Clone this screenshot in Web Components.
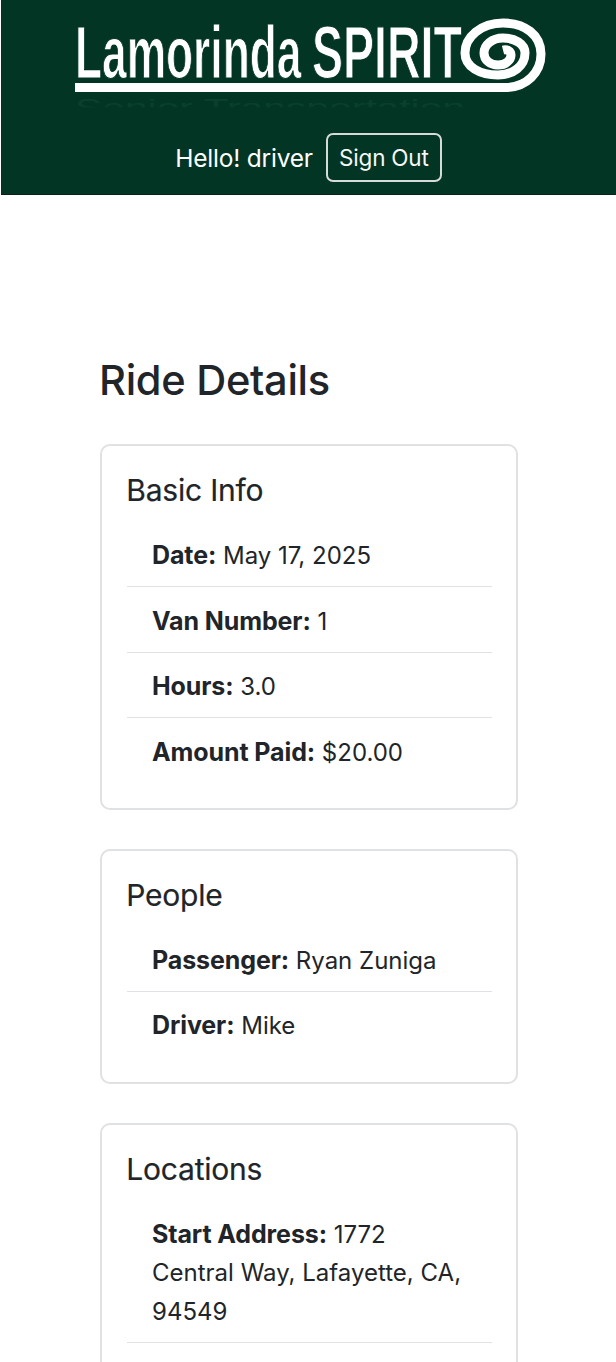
<!DOCTYPE html>
<html lang="en">
<head>
<meta charset="utf-8">
<title>Ride Details</title>
<style>
    html, body { margin: 0; height: 100%; overflow: hidden; background: #fff; }
    body { font-family: Inter, "Liberation Sans", sans-serif; color: #212529; }
</style>
</head>
<body>
<template id="site-header-tpl">
    <style>
        :host { display: block; background: #023524; color: #fff; height: 194px; margin-left: 1px; border-bottom: 1px solid #0b1f18; }
        svg.logo { display: block; width: 616px; height: 120px; margin-left: -1px; }
        .user { display: flex; justify-content: center; align-items: center; gap: 13px; height: 49px; margin-top: 13px; }
        .hello { font-size: 24.5px; letter-spacing: -0.2px; }
        button { font: inherit; font-size: 22.5px; letter-spacing: -0.2px; color: #f6f7f6; background: transparent; border: 2px solid #d5dbd8; border-radius: 7px; width: 116px; height: 49px; padding: 0; }
    </style>
    <svg class="logo" viewBox="0 0 616 120" aria-label="Lamorinda SPIRIT">
        <defs>
            <linearGradient id="fade" gradientUnits="userSpaceOnUse" x1="0" y1="96" x2="0" y2="108">
                <stop offset="0" stop-color="#0c4231"/>
                <stop offset="0.85" stop-color="#0a3e2d"/>
                <stop offset="1" stop-color="#023524"/>
            </linearGradient>
        </defs>
        <text transform="translate(75 78) scale(.5986 1)" font-family="'Liberation Sans', sans-serif" font-weight="700" font-size="74" fill="#fff" stroke="#023524" stroke-width="1.2">Lamorinda</text>
        <text transform="translate(312 78) scale(.629 1)" font-family="'Liberation Sans', sans-serif" font-weight="700" font-size="74" fill="#fff" stroke="#023524" stroke-width="1.2">SPIRIT</text>
        <path d="M75 87.5H505C527 87.5 541 72 541 54C541 35 525 23 503 23C481 23 465 37 465 53C465 67 480 75 498 75C513 75 525 66 525 53C525 44 515 38 503 38C492 38 484 45 484 53C484 60 490 65 498 65C506 65 511 60 511 55C511 51 507 49 503 50" fill="none" stroke="#fff" stroke-width="9"/>
        <text x="75" y="116" font-family="'Liberation Sans', sans-serif" font-size="24" fill="url(#fade)" textLength="390" lengthAdjust="spacingAndGlyphs">Senior Transportation</text>
    </svg>
    <div class="user">
        <span class="hello">Hello! driver</span>
        <button type="button">Sign Out</button>
    </div>
</template>

<template id="detail-card-tpl">
    <style>
        :host { display: block; border: 2px solid #e0e1e3; border-radius: 10px; padding: 25px 24px 25px 25px; margin-bottom: 39px; background: #fff; }
        h2 { margin: 0 0 11.5px -0.8px; font-size: 30px; line-height: 39px; font-weight: 400; letter-spacing: -0.2px; -webkit-text-stroke: 0.2px currentColor; }
    </style>
    <h2><slot name="title"></slot></h2>
    <slot></slot>
</template>

<template id="detail-row-tpl">
    <style>
        :host { display: block; padding: 14.5px 26px 10.5px 25px; font-size: 24px; line-height: 38.6px; border-bottom: 1px solid #dfe1e4; }
        :host(:last-child) { border-bottom: 0; }
        b { font-weight: 700; font-size: 25px; letter-spacing: -0.1px; }
    </style>
    <b><slot name="label"></slot></b> <slot></slot>
</template>

<template id="ride-details-tpl">
    <style>
        :host { display: block; height: 1167px; overflow: hidden; padding: 0 98px 0 100px; }
        h1 { margin: 0 0 38px -1px; padding-top: 159px; font-size: 41.6px; line-height: 52px; font-weight: 500; letter-spacing: -0.3px; }
    </style>
    <h1>Ride Details</h1>
    <slot></slot>
</template>

<site-header></site-header>
<ride-details>
    <detail-card>
        <span slot="title">Basic Info</span>
        <detail-row><span slot="label">Date:</span>May 17, 2025</detail-row>
        <detail-row><span slot="label">Van Number:</span>1</detail-row>
        <detail-row><span slot="label">Hours:</span>3.0</detail-row>
        <detail-row><span slot="label">Amount Paid:</span>$20.00</detail-row>
    </detail-card>
    <detail-card>
        <span slot="title">People</span>
        <detail-row><span slot="label">Passenger:</span>Ryan Zuniga</detail-row>
        <detail-row><span slot="label">Driver:</span>Mike</detail-row>
    </detail-card>
    <detail-card>
        <span slot="title">Locations</span>
        <detail-row><span slot="label">Start Address:</span>1772 Central Way, Lafayette, CA, 94549</detail-row>
        <detail-row>&nbsp;</detail-row>
    </detail-card>
</ride-details>

<script>
    function define(name, tplId) {
        customElements.define(name, class extends HTMLElement {
            constructor() {
                super();
                this.attachShadow({ mode: 'open' });
                const tpl = document.getElementById(tplId);
                this.shadowRoot.appendChild(tpl.content.cloneNode(true));
            }
        });
    }
    define('site-header', 'site-header-tpl');
    define('ride-details', 'ride-details-tpl');
    define('detail-card', 'detail-card-tpl');
    define('detail-row', 'detail-row-tpl');
</script>
</body>
</html>
